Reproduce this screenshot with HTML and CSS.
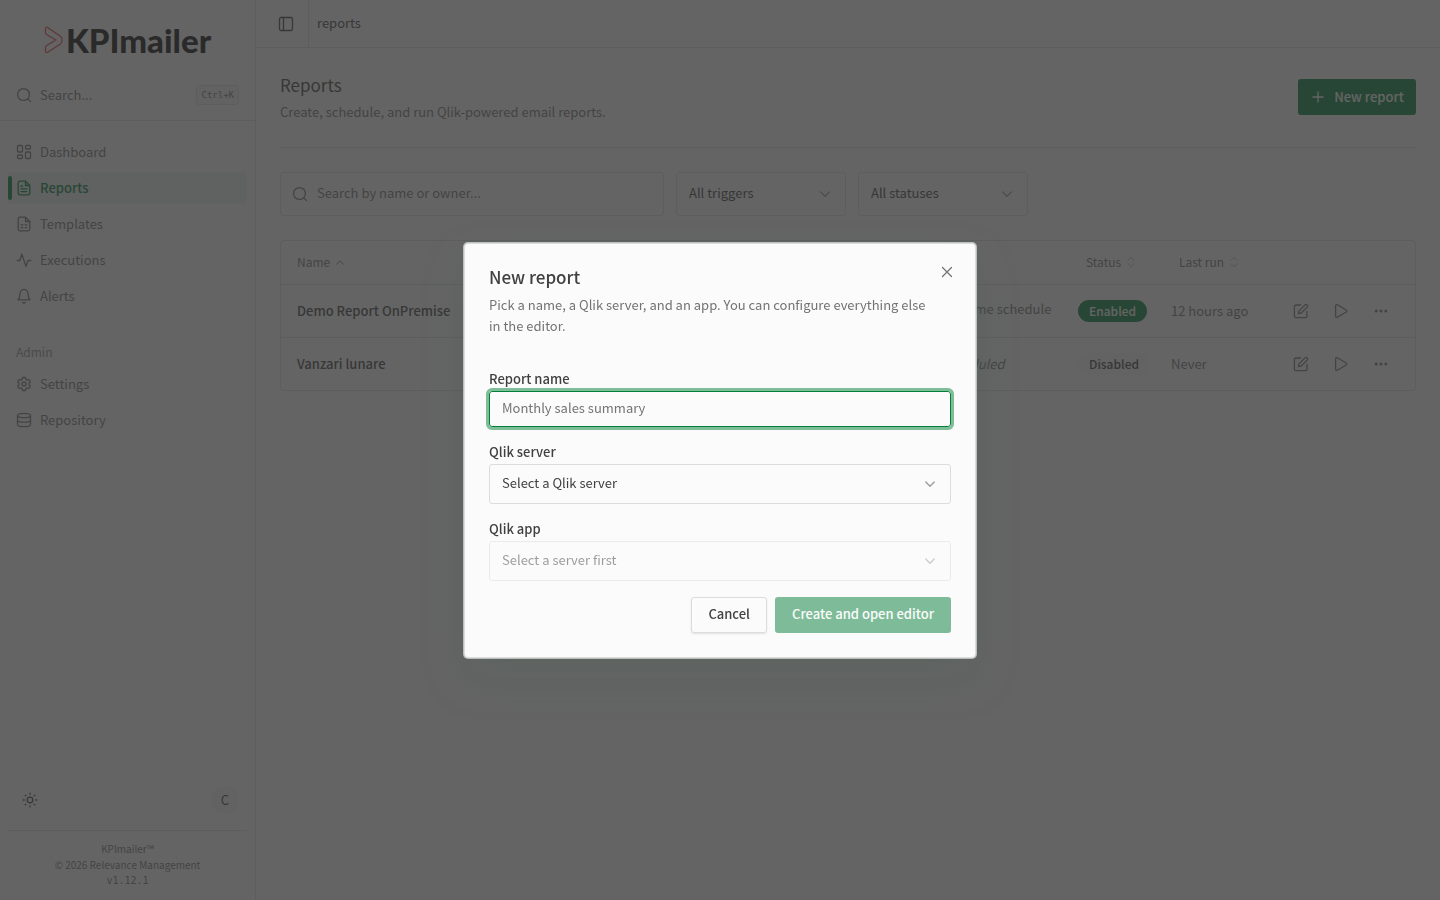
FILE: index.html
```html
<!DOCTYPE html>
<html lang="en">
<head>
<meta charset="utf-8">
<meta name="viewport" content="width=device-width, initial-scale=1">
<title>Reports - KPImailer</title>
<link rel="stylesheet" href="styles.css">
</head>
<body>
<svg class="sprite" aria-hidden="true">
  <symbol id="search" viewBox="0 0 16 16"><circle cx="7.500" cy="7.500" r="5.900"/><path d="M11.900 11.900 14.600 14.600"/></symbol>
  <symbol id="chevron-down" viewBox="0 0 16 16"><path d="M3.800 6 8 10.200 12.200 6"/></symbol>
  <symbol id="chevron-up" viewBox="0 0 16 16"><path d="M3.500 11 8 6.500l4.500 4.500"/></symbol>
  <symbol id="sort" viewBox="0 0 16 16"><path d="M4 5.500 8 1.800l4 3.700M4 10.500l4 3.700 4-3.700"/></symbol>
  <symbol id="edit" viewBox="0 0 16 16"><path d="M7.500 2H3a1.600 1.600 0 0 0-1.600 1.600V13A1.600 1.600 0 0 0 3 14.600h9.400A1.600 1.600 0 0 0 14 13V8.500"/><path d="M12 1.900a1.500 1.500 0 0 1 2.200 2.200L8.200 10l-2.800.6.6-2.700z"/></symbol>
  <symbol id="play" viewBox="0 0 16 16"><path d="M2.600 2.700v10.600c0 .9.9 1.400 1.700 1l8.900-5.300c.8-.5.8-1.500 0-2L4.300 1.700c-.8-.4-1.700.1-1.700 1z"/></symbol>
  <symbol id="more" viewBox="0 0 16 16"><g fill="currentColor" stroke="none"><circle cx="3.200" cy="8" r="1.500"/><circle cx="8" cy="8" r="1.500"/><circle cx="12.800" cy="8" r="1.500"/></g></symbol>
</svg>

<div class="app">
  <aside class="sidebar">
    <div class="brand">
      <svg class="brand-mark" viewBox="0 0 20 28"><path d="M1.500 2.500v4.200c0 .8.400 1.500 1 1.900L11.800 14l-9.300 5.500c-.6.400-1 1.100-1 1.900v3.800c0 1.200 1.200 1.700 2.200 1.100l13-8.600c1.800-1.300 1.900-5.900 0-7.200L3.700 1.500c-1-.7-2.200-.2-2.200 1z"/></svg>
      <span class="brand-name">KPImailer</span>
    </div>
    <button class="quick-search" type="button"><svg class="icon"><use href="#search"/></svg><span>Search...</span><kbd>Ctrl+K</kbd></button>
    <nav class="nav">
      <a class="nav-item" href="#"><svg class="icon" viewBox="0 0 16 16"><rect x="1.500" y="1.500" width="5" height="6.500" rx="1"/><rect x="9.500" y="1.500" width="5" height="3.500" rx="1"/><rect x="1.500" y="11" width="5" height="3.500" rx="1"/><rect x="9.500" y="8" width="5" height="6.500" rx="1"/></svg>Dashboard</a>
      <a class="nav-item active" href="#" aria-current="page"><svg class="icon" viewBox="0 0 16 16"><path d="M9.500 1.200H4A1.800 1.800 0 0 0 2.200 3v10A1.800 1.800 0 0 0 4 14.800h8a1.800 1.800 0 0 0 1.800-1.800V5.500zM9.500 1.200v4.300h4.300M5 6h1.500M5 8.800h6M5 11.600h6"/></svg>Reports</a>
      <a class="nav-item" href="#"><svg class="icon" viewBox="0 0 16 16"><path d="M9.500 1.200H4A1.800 1.800 0 0 0 2.200 3v10A1.800 1.800 0 0 0 4 14.800h8a1.800 1.800 0 0 0 1.800-1.800V5.500zM9.500 1.200v4.300h4.300M5 8.800h2M9 8.800h2M5 11.600h2M9 11.600h2"/></svg>Templates</a>
      <a class="nav-item" href="#"><svg class="icon" viewBox="0 0 16 16"><path d="M1.200 8.500h2c.5 0 .8-.3.900-.7L5.800 2 10 14.500l1.700-5.400c.1-.4.500-.6.900-.6h2.200"/></svg>Executions</a>
      <a class="nav-item" href="#"><svg class="icon" viewBox="0 0 16 16"><path d="M2 11.800h12c-1.200-1.300-1.900-2.800-1.900-5.400C12.100 3.600 10.400 1.500 8 1.500S3.900 3.600 3.900 6.400C3.900 9 3.200 10.500 2 11.800zM6.800 14.500c.6.500 1.800.5 2.400 0"/></svg>Alerts</a>
      <h2 class="nav-title">Admin</h2>
      <a class="nav-item" href="#"><svg class="icon" viewBox="0 0 16 16"><path d="M6.600 1.500h2.800l.5 1.900 1.200.7 1.900-.5 1.500 2.400L13 7.300v1.400l1.500 1.300-1.500 2.400-1.900-.5-1.200.7-.5 1.900H6.600l-.5-1.900-1.200-.7-1.900.5L1.500 10 3 8.700V7.300L1.500 6 3 3.600l1.900.5 1.200-.7z"/><circle cx="8" cy="8" r="2"/></svg>Settings</a>
      <a class="nav-item" href="#"><svg class="icon" viewBox="0 0 16 16"><ellipse cx="8" cy="3.500" rx="6.500" ry="2.200"/><path d="M1.500 3.500v9c0 1.200 2.900 2.200 6.500 2.200s6.500-1 6.500-2.200v-9M1.500 8c0 1.200 2.900 2.200 6.500 2.200s6.500-1 6.500-2.200"/></svg>Repository</a>
    </nav>
    <div class="account">
      <button class="icon-button" type="button" aria-label="Toggle theme"><svg class="icon" viewBox="0 0 16 16"><circle cx="8" cy="8" r="2.800"/><path d="M8 1.200v1M8 13.800v1M1.200 8h1M13.800 8h1M3.200 3.200l.7.7M12.100 12.100l.7.700M3.200 12.800l.7-.7M12.100 3.900l.7-.7"/></svg></button>
      <button class="avatar" type="button">C</button>
    </div>
    <footer class="legal"><strong>KPImailer™</strong><span>© 2026 Relevance Management</span><code>v1.12.1</code></footer>
  </aside>

  <div class="content">
    <header class="topbar">
      <button class="panel-toggle" type="button" aria-label="Toggle sidebar"><svg class="icon" viewBox="0 0 16 16"><rect x="1.500" y="1.500" width="13" height="13" rx="1.500"/><path d="M5.500 1.500v13"/></svg></button>
      <span class="crumb">reports</span>
    </header>
    <main class="page">
      <div class="page-head">
        <div><h1>Reports</h1><p>Create, schedule, and run Qlik-powered email reports.</p></div>
        <button class="button primary" type="button"><svg class="icon" viewBox="0 0 16 16"><path d="M8 3v10M3 8h10"/></svg>New report</button>
      </div>
      <div class="filters">
        <label class="search-box"><svg class="icon"><use href="#search"/></svg><input type="search" placeholder="Search by name or owner..." aria-label="Search reports"></label>
        <div class="select filter"><select aria-label="Trigger"><option>All triggers</option></select><svg class="icon"><use href="#chevron-down"/></svg></div>
        <div class="select filter"><select aria-label="Status"><option>All statuses</option></select><svg class="icon"><use href="#chevron-down"/></svg></div>
      </div>
      <div class="table-card">
        <table>
          <colgroup><col><col class="col-app"><col class="col-trigger"><col class="col-status"><col class="col-last"><col class="col-actions"></colgroup>
          <thead><tr>
            <th><button type="button">Name<svg class="icon"><use href="#chevron-up"/></svg></button></th>
            <th></th>
            <th><button type="button">Trigger<svg class="icon faint"><use href="#sort"/></svg></button></th>
            <th><button type="button">Status<svg class="icon faint"><use href="#sort"/></svg></button></th>
            <th><button type="button">Last run<svg class="icon faint"><use href="#sort"/></svg></button></th>
            <th></th>
          </tr></thead>
          <tbody>
            <tr>
              <td class="name">Demo Report OnPremise</td><td></td>
              <td><span class="schedule"><svg class="icon" viewBox="0 0 16 16"><circle cx="8" cy="8" r="6.500"/><path d="M8 4.500V8l2.500 1.500"/></svg>One-time schedule</span></td>
              <td><span class="badge on">Enabled</span></td><td>12 hours ago</td>
              <td><div class="actions"><button type="button" aria-label="Edit"><svg class="icon"><use href="#edit"/></svg></button><button type="button" aria-label="Run"><svg class="icon"><use href="#play"/></svg></button><button type="button" aria-label="More"><svg class="icon"><use href="#more"/></svg></button></div></td>
            </tr>
            <tr>
              <td class="name">Vanzari lunare</td><td></td>
              <td><em>Not scheduled</em></td>
              <td><span class="badge">Disabled</span></td><td>Never</td>
              <td><div class="actions"><button type="button" aria-label="Edit"><svg class="icon"><use href="#edit"/></svg></button><button type="button" aria-label="Run"><svg class="icon"><use href="#play"/></svg></button><button type="button" aria-label="More"><svg class="icon"><use href="#more"/></svg></button></div></td>
            </tr>
          </tbody>
        </table>
      </div>
    </main>
  </div>
</div>

<div class="overlay">
  <form class="modal" role="dialog" aria-modal="true" aria-labelledby="modal-title">
    <button class="close" type="button" aria-label="Close"><svg class="icon" viewBox="0 0 16 16"><path d="M3.500 3.500l9 9M12.500 3.500l-9 9"/></svg></button>
    <h2 id="modal-title">New report</h2>
    <p>Pick a name, a Qlik server, and an app. You can configure everything else in the editor.</p>
    <div class="field"><label for="report-name">Report name</label><input id="report-name" type="text" placeholder="Monthly sales summary"></div>
    <div class="field"><label for="server">Qlik server</label><div class="select"><select id="server"><option>Select a Qlik server</option></select><svg class="icon"><use href="#chevron-down"/></svg></div></div>
    <div class="field"><label for="qlik-app">Qlik app</label><div class="select disabled"><select id="qlik-app" disabled><option>Select a server first</option></select><svg class="icon"><use href="#chevron-down"/></svg></div></div>
    <div class="modal-actions"><button class="button outline" type="button">Cancel</button><button class="button primary" type="submit" disabled>Create and open editor</button></div>
  </form>
</div>
</body>
</html>
```
FILE: styles.css
```css
:root {
  --bg: #fbfbfb;
  --text: #404040;
  --muted: #737373;
  --border: #dcdcdc;
  --green: #037f39;
}
* { box-sizing: border-box; }
body {
  margin: 0;
  background: var(--bg);
  color: var(--text);
  font: 13px/20px "Noto Sans CJK SC", "Noto Sans", sans-serif;
}
h1, h2, p { margin: 0; }
button, input, select { font: inherit; color: inherit; }
button { background: none; border: 0; padding: 0; }
a { color: inherit; text-decoration: none; }
.sprite { position: absolute; width: 0; height: 0; }
.icon {
  width: 16px;
  height: 16px;
  flex: none;
  fill: none;
  stroke: currentColor;
  stroke-width: 1.3;
  stroke-linecap: round;
  stroke-linejoin: round;
}
.app { display: flex; min-height: 100vh; }

.sidebar {
  display: flex;
  flex-direction: column;
  width: 256px;
  border-right: 1px solid var(--border);
  color: var(--muted);
}
.brand { display: flex; align-items: center; justify-content: center; gap: 2px; height: 80px; }
.brand-mark { width: 20px; height: 28px; fill: none; stroke: #e5383d; stroke-width: 1.2; }
.brand-name { font: 900 33px/40px Lato, sans-serif; color: #0a0a0a; }
.quick-search {
  display: flex;
  align-items: center;
  gap: 8px;
  height: 41px;
  padding: 0 16px 10px;
  border-bottom: 1px solid var(--border);
}
.quick-search kbd {
  margin-left: auto;
  padding: 0 4px;
  border: 1px solid var(--border);
  border-radius: 3px;
  background: #f1f1f1;
  font: 9px/18px "DejaVu Sans Mono", monospace;
}
.nav { display: flex; flex-direction: column; gap: 4px; padding: 15px 8px; }
.nav-item { display: flex; align-items: center; gap: 8px; height: 32px; padding: 0 8px; border-radius: 4px; position: relative; }
.nav-item.active { background: #e6f0eb; color: var(--green); font-weight: 500; }
.nav-item.active::before {
  content: "";
  position: absolute;
  left: 0;
  top: 4px;
  bottom: 4px;
  width: 4px;
  border-radius: 2px;
  background: var(--green);
}
.nav-title { padding: 20px 8px 0; font-size: 12px; line-height: 32px; font-weight: 400; height: 48px; color: #8c8c8c; }
.account { display: flex; align-items: center; justify-content: space-between; margin: auto 8px 0; padding: 0 8px 16px; border-bottom: 1px solid var(--border); }
.icon-button { display: grid; place-items: center; width: 28px; height: 28px; color: var(--text); }
.avatar { width: 28px; height: 28px; border-radius: 50%; background: #f1f1f1; color: var(--text); }
.legal { display: flex; flex-direction: column; align-items: center; padding: 10px 8px 11px; font-size: 10px; line-height: 16px; }
.legal strong { font-weight: 400; }
.legal code { font: 10px/16px "DejaVu Sans Mono", monospace; }

.content { flex: 1; min-width: 0; }
.topbar { display: flex; height: 48px; border-bottom: 1px solid var(--border); }
.panel-toggle { display: grid; place-items: center; width: 53px; padding-left: 7px; border-right: 1px solid var(--border); }
.crumb { padding: 13px 8px; }
.page { padding: 24px; }
.page-head { display: flex; justify-content: space-between; align-items: flex-start; height: 76px; border-bottom: 1px solid var(--border); }
.page-head > div { padding-top: 1px; }
.page-head h1 { font-size: 17px; line-height: 24px; font-weight: 400; margin-bottom: 5px; }
.page-head p { color: var(--muted); }
.button {
  display: flex;
  align-items: center;
  height: 36px;
  padding: 0 17px 2px;
  border-radius: 3px;
  font-weight: 500;
}
.button.primary { background: var(--green); color: #fbfbfb; }
.page-head .button { gap: 8px; padding: 0 12px; margin-top: 7px; }
.button.outline { padding: 0 16px 2px; border: 1px solid var(--border); box-shadow: 0 1px 2px rgba(0, 0, 0, .1); }
.button:disabled { opacity: .5; }
.filters { display: flex; gap: 12px; margin: 24px 0; }
.search-box { display: flex; align-items: center; gap: 8px; width: 384px; height: 44px; padding: 0 12px; border: 1px solid var(--border); border-radius: 3px; color: var(--muted); }
.search-box .icon { margin-left: -1px; margin-right: 1px; }
.search-box input { flex: 1; min-width: 0; border: 0; padding: 0 0 2px; background: none; outline: 0; }
::placeholder { color: var(--muted); opacity: 1; }
.select { display: grid; align-items: center; }
.select > * { grid-area: 1 / 1; }
.select select {
  appearance: none;
  width: 100%;
  height: 40px;
  padding: 0 12px 2px;
  border: 1px solid var(--border);
  border-radius: 3px;
  background: none;
  opacity: 1;
}
.select .icon { justify-self: end; margin-right: 13px; color: var(--muted); opacity: .7; pointer-events: none; }
.select.disabled { opacity: .5; }
.filter { width: 170px; }
.filter select { height: 44px; }

.table-card { border: 1px solid var(--border); border-radius: 4px; }
table { width: 100%; table-layout: fixed; border-collapse: collapse; color: var(--muted); }
.col-app { width: 328px; }
.col-trigger { width: 161px; }
.col-status { width: 93px; }
.col-last { width: 114px; }
.col-actions { width: 138px; }
th, td { padding: 0 8px; text-align: left; white-space: nowrap; }
th { height: 43px; font-size: 12px; font-weight: 400; }
th button { display: flex; align-items: center; gap: 4px; padding: 0 8px; }
th .icon { width: 12px; height: 12px; }
.faint { opacity: .5; }
td { height: 53px; border-top: 1px solid var(--border); }
td.name { padding-left: 16px; color: var(--text); font-weight: 500; }
.schedule { display: flex; align-items: center; gap: 6px; padding-bottom: 4px; }
.schedule .icon { width: 14px; height: 14px; }
.badge { display: inline-block; padding: 0 11px; border-radius: 12px; background: #f4f4f4; color: var(--text); font-size: 12px; line-height: 22px; font-weight: 500; }
.badge.on { background: var(--green); color: #fbfbfb; }
.actions { display: flex; gap: 8px; }
.actions button { display: grid; place-items: center; width: 32px; height: 32px; }

.overlay { position: fixed; inset: 0; display: grid; place-items: center; background: rgba(53, 53, 53, .76); }
.modal {
  position: relative;
  width: 512px;
  max-width: 100%;
  padding: 23px 24px 24px;
  border: 1px solid var(--border);
  border-radius: 4px;
  background: var(--bg);
  box-shadow: 0 0 0 1px #b9c1bd, 0 20px 38px rgba(80, 98, 88, .35);
}
.modal h2 { font-size: 17px; line-height: 20px; font-weight: 500; }
.modal p { margin: 7px 0 33px; padding-right: 16px; line-height: 21px; color: var(--muted); }
.close { position: absolute; top: 19px; right: 19px; display: grid; place-items: center; width: 18px; height: 18px; color: var(--muted); }
.field { display: grid; gap: 2px; margin-bottom: 15px; }
.field label { font-weight: 500; }
.field input {
  height: 36px;
  padding: 0 12px 2px;
  border: 1px solid var(--green);
  border-radius: 3px;
  background: none;
  outline: 3px solid #7dbd98;
  outline-offset: 0;
}
.modal-actions { display: flex; justify-content: flex-end; gap: 8px; padding-top: 1px; }
```
